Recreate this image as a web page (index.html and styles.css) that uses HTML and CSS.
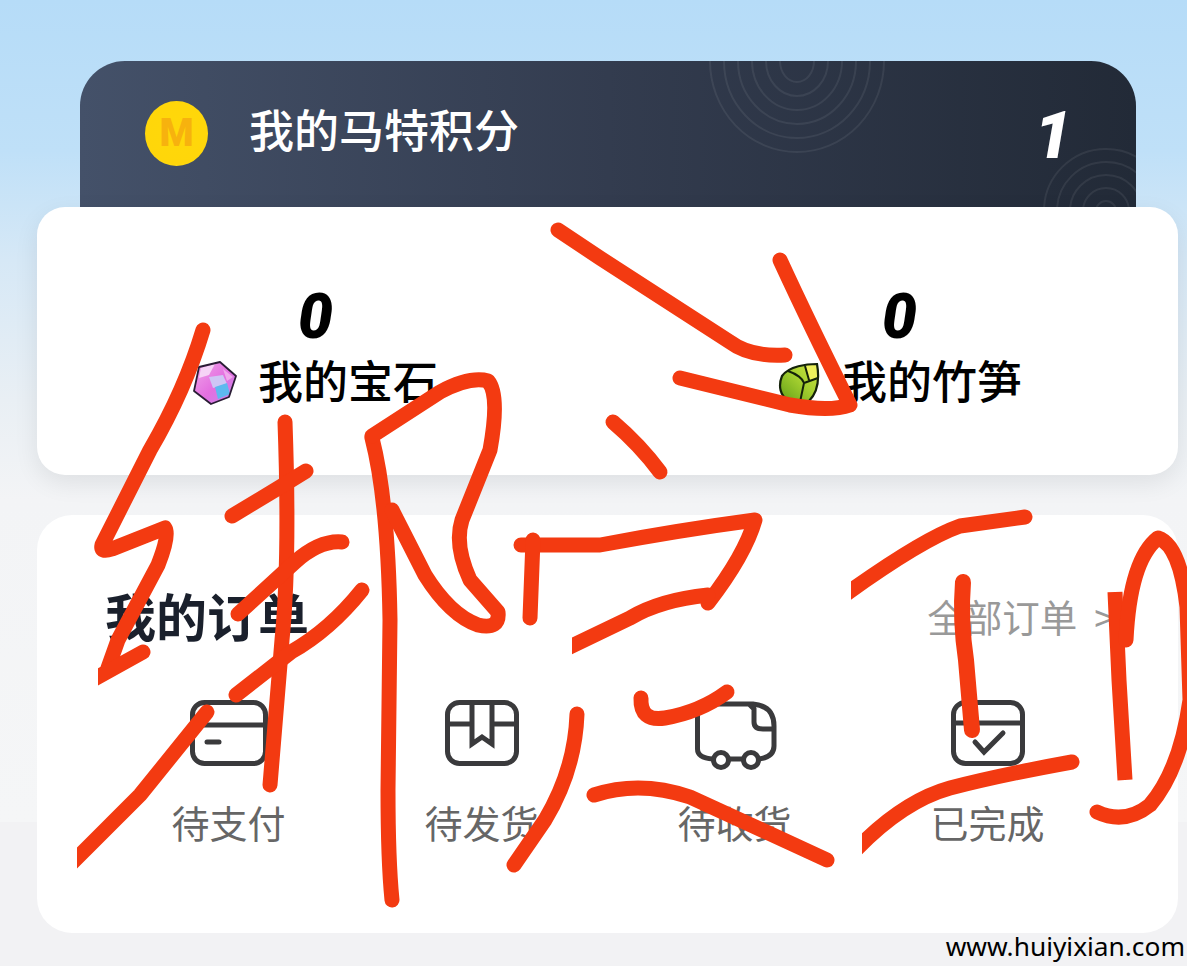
FILE: index.html
```html
<!DOCTYPE html>
<html lang="zh-CN">
<head>
  <meta charset="UTF-8">
  <meta name="viewport" content="width=device-width, initial-scale=1.0">
  <title>我的马特积分</title>
  <link rel="stylesheet" href="styles.css">
</head>
<body>
  <div class="page">
    <div class="points">
      <svg class="rings" viewBox="0 0 1056 146" width="1056" height="146">
        <g fill="none" stroke="#ffffff" stroke-opacity="0.07" stroke-width="2">
          <ellipse cx="717" cy="0" rx="87" ry="91"/>
          <ellipse cx="717" cy="0" rx="73" ry="77"/>
          <ellipse cx="717" cy="0" rx="59" ry="63"/>
          <ellipse cx="717" cy="0" rx="45" ry="49"/>
          <ellipse cx="717" cy="0" rx="31" ry="35"/>
          <ellipse cx="717" cy="0" rx="17" ry="21"/>
          <circle cx="1026" cy="150" r="62"/>
          <circle cx="1026" cy="150" r="49"/>
          <circle cx="1026" cy="150" r="36"/>
          <circle cx="1026" cy="150" r="23"/>
          <circle cx="1026" cy="150" r="10"/>
        </g>
      </svg>
      <div class="coin">M</div>
      <div class="points-title">我的马特积分</div>
      <div class="points-num">1</div>
    </div>

    <div class="assets">
      <div class="asset">
        <div class="asset-num">0</div>
        <div class="asset-label">
          <svg class="asset-icon" viewBox="0 0 44 44" width="44" height="44">
            <defs>
              <linearGradient id="gem" x1="0.1" y1="0.1" x2="0.9" y2="0.9">
                <stop offset="0" stop-color="#ee9ce8"/>
                <stop offset="0.55" stop-color="#e46fe0"/>
                <stop offset="1" stop-color="#c884ea"/>
              </linearGradient>
            </defs>
            <path d="M6 6 L27 1 L43 15 L36 36 L18 43 L1 30 Z" fill="url(#gem)"/>
            <path d="M8 7 L22 3 L16 14 L6 17 Z" fill="#f6d3f6"/>
            <path d="M16 16 L30 14 L34 23 L20 27 Z" fill="#cfc6f5"/>
            <path d="M22 26 L34 22 L37 33 L25 38 Z" fill="#5db9ef"/>
            <path d="M30 8 L40 16 L34 20 Z" fill="#f0a8ec"/>
            <path d="M6 6 L27 1 L43 15 L36 36 L18 43 L1 30 Z" fill="none" stroke="#2a1d35" stroke-width="1.800" stroke-linejoin="round"/>
          </svg>
          <span>我的宝石</span>
        </div>
      </div>
      <div class="asset">
        <div class="asset-num">0</div>
        <div class="asset-label">
          <svg class="asset-icon" viewBox="0 0 44 44" width="44" height="44">
            <defs>
              <linearGradient id="leaf" x1="0.1" y1="0.9" x2="0.9" y2="0.1">
                <stop offset="0" stop-color="#6fa91c"/>
                <stop offset="0.55" stop-color="#a5d030"/>
                <stop offset="1" stop-color="#c6df3c"/>
              </linearGradient>
            </defs>
            <g transform="translate(2 0)">
              <path d="M38 3 C28 3 10 5 3 15 C-1 25 1 35 10 40 L30 40 C38 32 41 20 38 3 Z" fill="url(#leaf)"/>
              <path d="M26 5 L38 3 L39 17 L30 19 Z" fill="#ecf05c"/>
              <path d="M38 3 C28 3 10 5 3 15 C-1 25 1 35 10 40 L30 40 C38 32 41 20 38 3 Z" fill="none" stroke="#14220a" stroke-width="2.200"/>
              <path d="M9 10 C18 13 24 18 25 22 L21 41 M25 22 L39 17 M26 5 L30 19" fill="none" stroke="#14220a" stroke-width="2"/>
            </g>
          </svg>
          <span>我的竹笋</span>
        </div>
      </div>
    </div>

    <div class="orders">
      <div class="orders-head">
        <div class="orders-title">我的订单</div>
        <div class="orders-all">全部订单<span class="orders-arrow">&gt;</span></div>
      </div>
      <div class="orders-grid">
        <div class="order-item">
          <div class="order-icon">
            <svg viewBox="0 0 78 66" width="78" height="66" fill="none" stroke="#3a3a3c" stroke-width="5">
              <rect x="2.500" y="2.500" width="73" height="61" rx="12"/>
              <path d="M2.500 25 H75.500"/>
              <path d="M17 42 H29" stroke-linecap="round"/>
            </svg>
          </div>
          <div class="order-text">待支付</div>
        </div>
        <div class="order-item">
          <div class="order-icon">
            <svg viewBox="0 0 74 66" width="74" height="66" fill="none" stroke="#3a3a3c" stroke-width="5">
              <rect x="2.500" y="2.500" width="69" height="61" rx="12"/>
              <path d="M2.500 24 H27 M47 24 H71.500"/>
              <path d="M27 3 V44 L37 37 L47 44 V3"/>
            </svg>
          </div>
          <div class="order-text">待发货</div>
        </div>
        <div class="order-item">
          <div class="order-icon">
            <svg viewBox="0 0 84 70" width="84" height="70" fill="none" stroke="#3a3a3c" stroke-width="5">
              <path d="M20 59 Q4.500 58 4.500 49 V16 Q4.500 4 16 4 H56 L61 9 V22 Q61 29 70 29 H81 M56 4 H60 Q81 6 81 26 V46 Q81 57 66 59 M36 59 H50"/>
              <circle cx="28" cy="60" r="7.500"/>
              <circle cx="58" cy="60" r="7.500"/>
            </svg>
          </div>
          <div class="order-text">待收货</div>
        </div>
        <div class="order-item">
          <div class="order-icon">
            <svg viewBox="0 0 74 66" width="74" height="66" fill="none" stroke="#3a3a3c" stroke-width="5">
              <rect x="2.500" y="2.500" width="69" height="61" rx="12"/>
              <path d="M2.500 23 H71.500"/>
              <path d="M24 42 L33 52 L52 33" stroke-linecap="round"/>
            </svg>
          </div>
          <div class="order-text">已完成</div>
        </div>
      </div>
    </div>

    <!-- red marker scribbled over the screenshot -->
    <svg class="scribble" viewBox="0 0 1187 966" width="1187" height="966" fill="none" stroke="#f33a11" stroke-width="15" stroke-linecap="round" stroke-linejoin="round">
      <defs>
        <clipPath id="cut-a"><rect x="98" y="600" width="100" height="100"/></clipPath>
        <clipPath id="cut-e"><rect x="77" y="680" width="160" height="220"/></clipPath>
        <clipPath id="cut-h"><rect x="572" y="560" width="160" height="110"/></clipPath>
        <clipPath id="cut-l"><rect x="851" y="500" width="200" height="120"/></clipPath>
        <clipPath id="cut-n"><rect x="862" y="740" width="230" height="130"/></clipPath>
      </defs>
      <path d="M203 330 Q185 390 150 450 L102 545 Q100 553 112 549 L165 528 Q170 535 158 565 L118 640 L108 668"/>
      <path d="M143 652 L85 684" clip-path="url(#cut-a)"/>
      <path d="M285 422 Q290 560 282 640 L270 785"/>
      <path d="M232 516 L285 484 L306 471"/>
      <path d="M342 542 Q320 540 295 562 L238 614"/>
      <path d="M362 590 Q330 630 291 652 L236 695"/>
      <path d="M207 712 L140 795 L60 875" clip-path="url(#cut-e)"/>
      <path d="M372 438 Q388 500 390 620 L388 790 Q388 860 392 900"/>
      <path d="M372 436 L440 392 Q470 376 488 381 Q500 395 490 450 L462 520 Q454 545 470 580 L498 612 Q500 630 478 625 Q450 615 425 575 L392 510"/>
      <path d="M613 422 Q640 445 660 472"/>
      <path d="M521 545 L600 545 Q680 530 755 520 Q745 555 708 603"/>
      <path d="M708 595 Q660 600 630 618 L555 654" clip-path="url(#cut-h)"/>
      <path d="M533 540 L530 618"/>
      <path d="M641 698 Q640 722 665 718 Q700 712 727 692"/>
      <path d="M577 714 Q575 770 545 820 L514 865"/>
      <path d="M594 795 Q640 780 690 797 L827 860"/>
      <path d="M835 602 Q920 540 960 526 L1025 517" clip-path="url(#cut-l)"/>
      <path d="M963 582 Q960 620 966 660 L972 730" stroke-width="16"/>
      <path d="M1072 762 Q1000 775 950 788 Q900 802 850 856" clip-path="url(#cut-n)"/>
      <path d="M1115 592 L1119 680 L1125 780" stroke-width="15" stroke-linecap="butt"/>
      <path d="M1126 640 Q1130 560 1158 538 Q1180 545 1187 607 L1190 700 Q1180 770 1150 805 Q1125 825 1097 812"/>
      <path d="M558 230 L600 258 L730 342 Q750 357 785 355"/>
      <path d="M780 260 Q810 325 850 405 Q830 412 790 405 L680 378"/>
    </svg>

    <div class="watermark">www.huiyixian.com</div>
  </div>
</body>
</html>
```

FILE: styles.css
```css
body {
  margin: 0;
  font-family: "Noto Sans CJK SC", "Noto Sans", sans-serif;
}

.page {
  position: relative;
  width: 1187px;
  height: 966px;
  padding: 61px 9px 0 37px;
  box-sizing: border-box;
  overflow: hidden;
  background: linear-gradient(180deg, #b6dcf8 0, #bfe0f8 150px, #d6e8f6 260px, #e9eff4 400px, #f3f4f6 500px, #f5f6f7 822px, #f2f2f4 822px);
}

/* points card */
.points {
  position: relative;
  display: flex;
  align-items: center;
  height: 146px;
  margin: 0 42px 0 43px;
  padding: 40px 64px 41px 65px;
  box-sizing: border-box;
  overflow: hidden;
  border-radius: 45px 45px 0 0;
  background: linear-gradient(90deg, #445169 0, #333c4f 50%, #222a37 100%);
}

.rings {
  position: absolute;
  top: 0;
  left: 0;
}

.coin {
  position: relative;
  width: 63px;
  height: 65px;
  border-radius: 50%;
  background: radial-gradient(circle at 50% 45%, #ffd80a 0, #ffd60a 70%, #ffe31e 86%, #f8bd0b 100%);
  color: #f7b20e;
  font: 900 39px/65px Roboto, sans-serif;
  text-align: center;
}

.points-title {
  position: relative;
  margin: 0 0 10px 41px;
  color: #ffffff;
  font-size: 45px;
  font-weight: 500;
  line-height: 60px;
}

.points-num {
  position: relative;
  margin: 4px 0 0 auto;
  color: #ffffff;
  font: italic 900 67px/65px Roboto, sans-serif;
}

/* gems and bamboo */
.assets {
  position: relative;
  display: grid;
  grid-template-columns: 500px 500px;
  justify-content: center;
  column-gap: 84px;
  height: 268px;
  padding-top: 79px;
  box-sizing: border-box;
  border-radius: 28px;
  background: #ffffff;
  box-shadow: 0 8px 24px rgba(0, 0, 0, 0.08);
}

.asset {
  display: flex;
  flex-direction: column;
  align-items: center;
}

.asset-num {
  color: #000000;
  font: italic 900 62px/62px Roboto, sans-serif;
}

.asset-label {
  display: flex;
  align-items: center;
  gap: 21px;
  margin-top: 2px;
  color: #000000;
  font-size: 45px;
  font-weight: 500;
  line-height: 60px;
}

.asset-icon {
  margin-top: 6px;
}

/* orders */
.orders {
  height: 418px;
  margin-top: 40px;
  padding: 70px 63px 0 68px;
  box-sizing: border-box;
  border-radius: 35px;
  background: #ffffff;
}

.orders-head {
  display: flex;
  justify-content: space-between;
  align-items: center;
  height: 60px;
}

.orders-title {
  color: #1a202c;
  font-size: 51px;
  font-weight: 700;
}

.orders-all {
  color: #999999;
  font-size: 37.500px;
}

.orders-arrow {
  margin-left: 17px;
}

.orders-grid {
  display: grid;
  grid-template-columns: repeat(4, 253px);
  margin: 55px 0 0 -3px;
}

.order-item {
  display: flex;
  flex-direction: column;
  align-items: center;
}

.order-icon {
  display: flex;
  align-items: flex-start;
  height: 70px;
}

.order-text {
  margin-top: 26px;
  color: #666666;
  font-size: 38px;
  line-height: 52px;
}

.scribble {
  position: absolute;
  top: 0;
  left: 0;
}

.watermark {
  position: absolute;
  right: 2px;
  bottom: 2px;
  color: #000000;
  font: 26.300px/36px "Noto Sans", sans-serif;
}
```
